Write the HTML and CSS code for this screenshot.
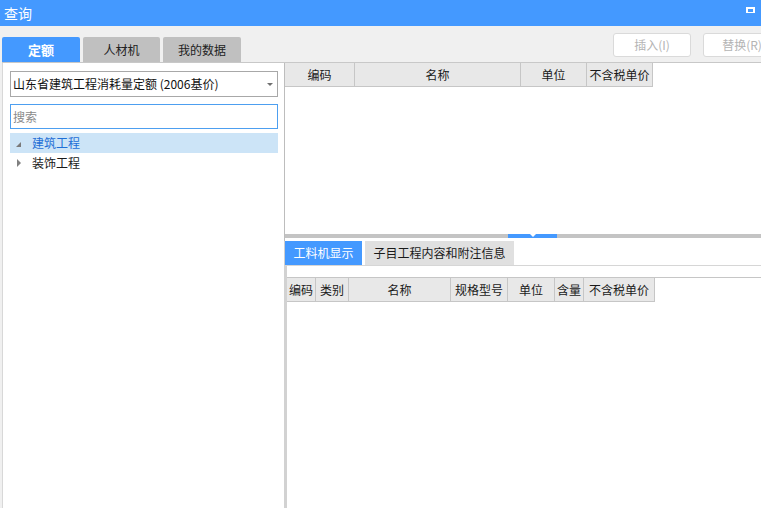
FILE: index.html
```html
<!DOCTYPE html>
<html lang="zh">
<head>
<meta charset="utf-8">
<link rel="stylesheet" href="styles.css">
</head>
<body>
<div class="window">
  <div class="titlebar">
    <span class="title">查询</span>
    <span class="max-icon"></span>
  </div>
  <div class="toolbar">
    <div class="tabs">
      <div class="tab active">定额</div>
      <div class="tab">人材机</div>
      <div class="tab">我的数据</div>
    </div>
    <div class="buttons">
      <div class="btn">插入(I)</div>
      <div class="btn">替换(R)</div>
    </div>
  </div>
  <div class="main">
    <div class="left">
      <div class="select">
        <span>山东省建筑工程消耗量定额 (2006基价)</span>
        <span class="caret"></span>
      </div>
      <div class="search">搜索</div>
      <div class="tree">
        <div class="row selected"><span class="arr-open"></span><span class="label">建筑工程</span></div>
        <div class="row"><span class="arr-closed"></span><span class="label">装饰工程</span></div>
      </div>
    </div>
    <div class="right">
      <div class="upper">
        <div class="thead">
          <div class="th w70">编码</div>
          <div class="th w166">名称</div>
          <div class="th w66">单位</div>
          <div class="th w66">不含税单价</div>
        </div>
      </div>
      <div class="splitter"><div class="handle"><span class="tri"></span></div></div>
      <div class="lower">
        <div class="subtabs">
          <div class="subtab active">工料机显示</div>
          <div class="subtab">子目工程内容和附注信息</div>
        </div>
        <div class="lower-body">
          <div class="gap"></div>
          <div class="thead2">
            <div class="th c29">编码</div>
            <div class="th c33">类别</div>
            <div class="th c102">名称</div>
            <div class="th c57">规格型号</div>
            <div class="th c47">单位</div>
            <div class="th c29">含量</div>
            <div class="th c71">不含税单价</div>
          </div>
        </div>
      </div>
    </div>
  </div>
</div>
</body>
</html>
```

FILE: styles.css
```css
* { box-sizing: border-box; }
html, body {
  margin: 0;
  padding: 0;
  width: 761px;
  height: 508px;
  overflow: hidden;
  background: #f0f0f0;
  font-family: "Noto Sans CJK SC", "Liberation Sans", sans-serif;
  font-size: 12px;
  color: #1a1a1a;
}
.window { width: 761px; height: 508px; display: flex; flex-direction: column; }

.titlebar {
  height: 26px;
  background: #4499ff;
  display: flex;
  align-items: center;
  padding-left: 4px;
  flex-shrink: 0;
}
.title { color: #fff; font-size: 14px; line-height: 18px; }
.max-icon {
  margin-left: auto;
  margin-right: 6px;
  margin-bottom: 6px;
  width: 9px;
  height: 6px;
  border: 2px solid #fff;
  border-bottom-width: 1px;
}

.toolbar {
  height: 36px;
  display: flex;
  flex-shrink: 0;
  overflow: visible;
}
.tabs {
  display: flex;
  align-items: flex-end;
  gap: 3px;
  padding-left: 2px;
}
.tab {
  width: 77px;
  height: 25px;
  background: #c0c0c0;
  border-radius: 2px 2px 0 0;
  text-align: center;
  line-height: 25px;
  font-size: 12px;
  color: #222;
}
.tab:first-child { width: 78px; }
.tab:last-child { width: 78px; }
.tab.active { background: #4499ff; color: #fff; font-weight: bold; font-size: 13px; }

.buttons {
  margin-left: auto;
  margin-right: -20px;
  margin-top: 7px;
  display: flex;
  gap: 12px;
  align-items: flex-start;
}
.btn {
  width: 78px;
  height: 24px;
  background: #fff;
  border: 1px solid #dadada;
  border-radius: 3px;
  color: #b4b4b4;
  text-align: center;
  line-height: 22px;
  font-size: 12px;
}

.main {
  flex: 1;
  display: flex;
  border-top: 1px solid #c8c8c8;
  margin-left: 2px;
  min-height: 0;
}
.left {
  width: 283px;
  background: #fff;
  border-left: 1px solid #d8d8d8;
  border-right: 1px solid #bdbdbd;
  padding: 8px 6px 0 7px;
  display: flex;
  flex-direction: column;
}
.select {
  height: 26px;
  border: 1px solid #a8a8a8;
  display: flex;
  align-items: center;
  padding-left: 2px;
  font-size: 12px;
  line-height: 16px;
  color: #111;
}
.caret {
  margin-left: auto;
  margin-right: 4px;
  width: 0;
  height: 0;
  border-left: 3px solid transparent;
  border-right: 3px solid transparent;
  border-top: 3px solid #707070;
}
.search {
  margin-top: 7px;
  height: 25px;
  border: 1px solid #4d9ff0;
  padding-left: 2px;
  color: #8a8a8a;
  line-height: 23px;
  font-size: 12px;
}
.tree { margin-top: 4px; }
.row {
  height: 20px;
  display: flex;
  align-items: center;
  padding-left: 6px;
}
.row + .row { height: 19px; }
.row.selected { background: #cce4f7; }
.row.selected .label { color: #1f6fd6; }
.label { margin-left: 11px; font-size: 12px; line-height: 16px; }
.arr-open {
  width: 0;
  height: 0;
  border-left: 5px solid transparent;
  border-bottom: 5px solid #7a7a7a;
  margin-top: 3px;
}
.arr-closed {
  width: 0;
  height: 0;
  border-top: 4px solid transparent;
  border-bottom: 4px solid transparent;
  border-left: 4px solid #808080;
  margin-left: 1px;
}
.arr-closed + .label { margin-left: 11px; }

.right {
  flex: 1;
  display: flex;
  flex-direction: column;
  min-width: 0;
}
.upper {
  height: 171px;
  background: #fff;
}
.thead, .thead2 {
  display: flex;
  height: 24px;
}
.th {
  background: #e8e8e8;
  border-right: 1px solid #c6c6c6;
  border-bottom: 1px solid #c6c6c6;
  text-align: center;
  line-height: 23px;
  font-size: 12px;
  color: #1a1a1a;
  white-space: nowrap;
}
.w70 { width: 70px; }
.w166 { width: 166px; }
.w66 { width: 66px; }

.splitter {
  height: 4px;
  background: #c4c4c4;
  position: relative;
}
.handle {
  position: absolute;
  left: 223px;
  top: 0;
  width: 49px;
  height: 4px;
  background: #4499ff;
  display: flex;
  justify-content: center;
}
.tri {
  width: 0;
  height: 0;
  border-left: 3px solid transparent;
  border-right: 3px solid transparent;
  border-top: 3px solid #fff;
}

.lower {
  flex: 1;
  background: #fff;
  display: flex;
  flex-direction: column;
  padding-top: 3px;
}
.subtabs {
  display: flex;
  gap: 3px;
  height: 25px;
  border-bottom: 1px solid #d6d6d6;
  border-left: 1px solid #cfcfcf;
  margin-left: -1px;
}
.subtab {
  height: 24px;
  line-height: 24px;
  background: #e0e0e0;
  font-size: 12px;
  color: #1a1a1a;
  padding: 0;
  text-align: center;
  width: 149px;
}
.subtab.active { width: 77px; background: #4499ff; color: #fff; }
.lower-body {
  flex: 1;
  border-left: 3px solid #d2d2d2;
  margin-left: -1px;
}
.gap {
  height: 12px;
  border-bottom: 1px solid #c6c6c6;
}
.thead2 { height: 24px; }
.c29 { width: 29px; }
.c33 { width: 33px; }
.c102 { width: 102px; }
.c57 { width: 57px; }
.c47 { width: 47px; }
.c71 { width: 71px; }
```
